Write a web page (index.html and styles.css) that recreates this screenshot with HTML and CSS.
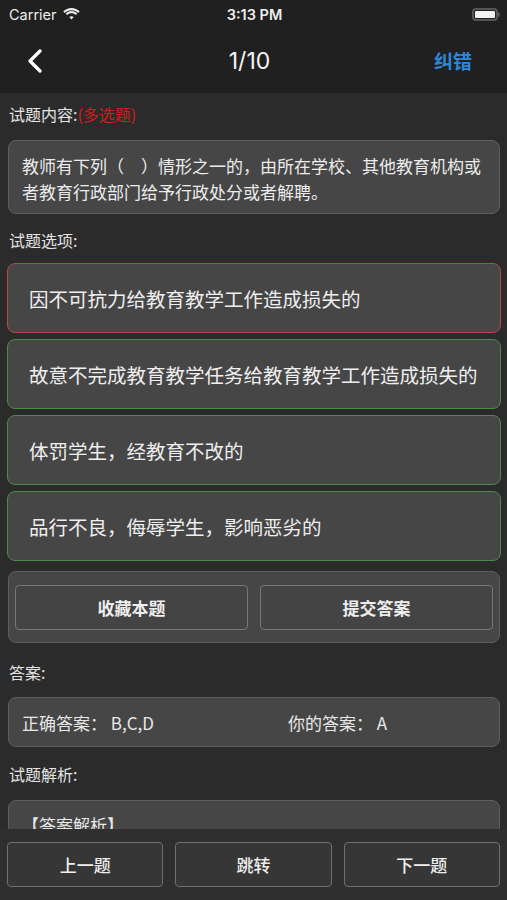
FILE: index.html
```html
<!DOCTYPE html>
<html lang="zh">
<head>
  <meta charset="UTF-8">
  <meta name="viewport" content="width=device-width, initial-scale=1.0">
  <title>试题</title>
  <link rel="stylesheet" href="styles.css">
</head>
<body>
  <div class="header">
    <div class="status-bar">
      <div class="carrier">Carrier
        <svg class="wifi" width="17" height="12" viewBox="0 0 17 12">
          <path d="M8.5 2.2c2.6 0 5 1 6.8 2.7l1.4-1.5C14.5 1.3 11.6 0 8.5 0S2.5 1.3.3 3.4l1.4 1.5C3.5 3.2 5.9 2.2 8.5 2.2z" fill="#eee"/>
          <path d="M8.5 5.3c1.7 0 3.2.6 4.4 1.7l1.4-1.5C12.8 4 10.7 3.1 8.5 3.1S4.2 4 2.7 5.5l1.4 1.5c1.2-1.1 2.7-1.7 4.4-1.7z" fill="#eee"/>
          <path d="M8.5 8.3c.9 0 1.6.3 2.2.8L8.5 11.6 6.3 9.1c.6-.5 1.3-.8 2.2-.8z" fill="#eee"/>
        </svg>
      </div>
      <div class="time">3:13 PM</div>
      <div class="battery"><span class="level"></span></div>
    </div>
    <div class="nav-bar">
      <div class="back">
        <svg width="16" height="24" viewBox="0 0 16 24">
          <path d="M13 2L3 12l10 10" fill="none" stroke="#fff" stroke-width="3.2" stroke-linecap="round" stroke-linejoin="round"/>
        </svg>
      </div>
      <div class="title">1/10</div>
      <div class="fix">纠错</div>
    </div>
  </div>

  <div class="main-content">
    <div class="label">试题内容:<span class="type">(多选题)</span></div>
    <div class="box question">教师有下列（　）情形之一的，由所在学校、其他教育机构或者教育行政部门给予行政处分或者解聘。</div>

    <div class="label">试题选项:</div>
    <div class="options">
      <div class="option wrong">因不可抗力给教育教学工作造成损失的</div>
      <div class="option right">故意不完成教育教学任务给教育教学工作造成损失的</div>
      <div class="option right">体罚学生，经教育不改的</div>
      <div class="option right">品行不良，侮辱学生，影响恶劣的</div>
    </div>

    <div class="box actions">
      <button>收藏本题</button>
      <button>提交答案</button>
    </div>

    <div class="label">答案:</div>
    <div class="box answer">
      <div>正确答案：&nbsp;B,C,D</div>
      <div>你的答案：&nbsp;A</div>
    </div>

    <div class="label">试题解析:</div>
    <div class="box analysis">【答案解析】</div>
  </div>

  <div class="footer">
    <button>上一题</button>
    <button>跳转</button>
    <button>下一题</button>
  </div>
</body>
</html>
```

FILE: styles.css
```css
* { margin: 0; padding: 0; box-sizing: border-box; }
body { font-family: "Noto Sans CJK SC", "Noto Sans", sans-serif; background-color: #2b2b2b; color: #e8e8e8; height: 900px; overflow: hidden; }

.header { background-color: #202020; }
.status-bar { height: 28px; display: flex; align-items: center; justify-content: space-between; padding: 0 7px 0 9px; font-family: Inter, "Noto Sans", sans-serif; font-size: 14.5px; color: #eee; }
.carrier { display: flex; align-items: center; gap: 6px; width: 100px; }
.time { font-weight: 600; }
.battery { width: 100px; height: 13px; display: flex; justify-content: flex-end; }
.battery .level { width: 26px; height: 13px; border: 2px solid #555; border-radius: 4px; background: #f2f2f2; background-clip: content-box; padding: 1px; }
.battery::after { content: ""; width: 2px; height: 5px; background: #555; border-radius: 0 2px 2px 0; align-self: center; }

.nav-bar { height: 65px; display: flex; align-items: center; justify-content: space-between; padding: 0 35px 0 27px; }
.nav-bar .back { width: 80px; display: flex; }
.nav-bar .title { font-family: Inter, "Noto Sans", sans-serif; font-size: 23px; color: #f4f4f4; }
.nav-bar .fix { width: 80px; text-align: right; color: #2f86d8; font-size: 19px; font-weight: bold; }

.main-content { padding: 10px 7px 0 8px; }
.label { font-size: 16px; line-height: 22px; color: #e4e4e4; padding-left: 1px; }
.label .type { color: #d41c1c; }

.box { background-color: #464646; border: 1px solid #5e5e5e; border-radius: 8px; }
.question { margin: 15px 0 15px; padding: 12px 8px 8px 13px; font-size: 17px; line-height: 26px; color: #ececec; }

.options { margin: 12px -1px 10px -1px; display: flex; flex-direction: column; gap: 6px; }
.option { height: 70px; display: flex; align-items: center; padding-left: 21px; font-size: 19.5px; color: #efefef; background-color: #464646; border: 1.5px solid #4d8a4b; border-radius: 8px; }
.option.wrong { border-color: #b34a46; }

.actions { display: flex; gap: 12px; padding: 13px 6px 12px 6px; margin-bottom: 18px; }
.actions button { flex: 1; height: 45px; }
button { font-family: "Noto Sans CJK SC", sans-serif; font-size: 17px; font-weight: bold; color: #eee; background-color: #444; border: 1.5px solid #777; border-radius: 4px; }

.answer { margin: 14px 0 16px; height: 50px; display: grid; grid-template-columns: 266px 1fr; align-items: center; padding-left: 13px; font-size: 17px; }
.analysis { margin-top: 15px; padding: 10px 13px; font-size: 17px; line-height: 28px; height: 90px; }

.footer { position: fixed; left: 0; right: 0; bottom: 0; height: 71px; background-color: #2f2f2f; display: flex; gap: 12px; padding: 13px 7px; }
.footer button { flex: 1; background-color: #363636; border-color: #707070; font-weight: 500; }
```
